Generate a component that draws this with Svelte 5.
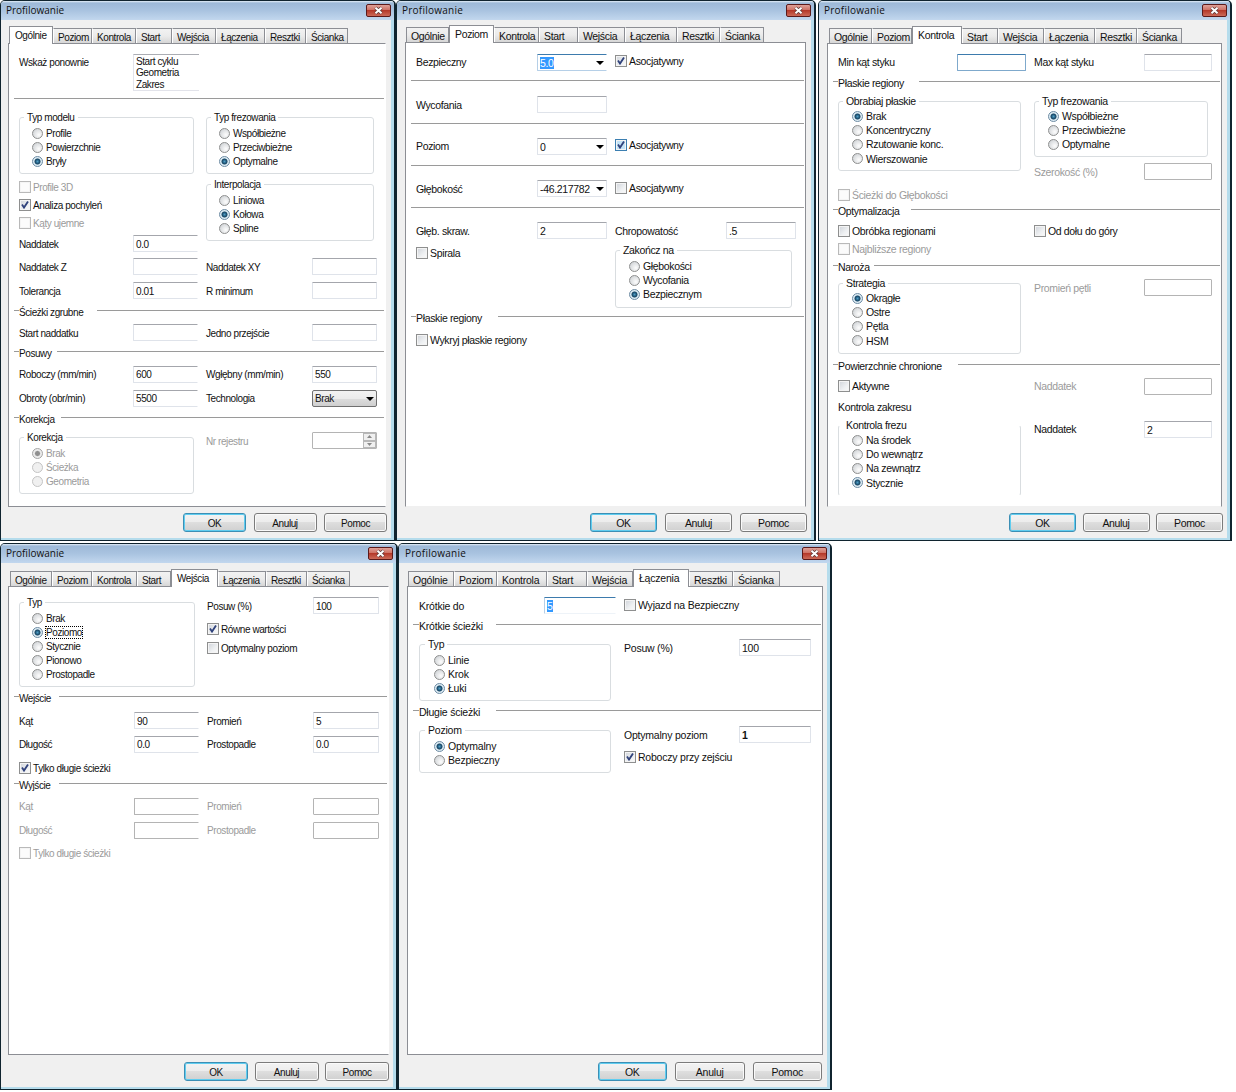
<script>
  const tabNames = ['Ogólnie', 'Poziom', 'Kontrola', 'Start', 'Wejścia', 'Łączenia', 'Resztki', 'Ścianka'];

  // gap = space above an item, h = height of the row, room = width kept free for a section title
  const general = {
    id: 'general', width: 396, height: 541, left: 8, pane: 378, strip: 17, indent: 1, spacing: -0.42,
    active: 0, tabs: [44, 39, 44, 36, 44, 49, 41, 42], cols: [114, 73, 106, 65], button: 63, between: 7.5,
    sections: [
      { left: [{ kind: 'list', label: 'Wskaż ponownie', options: ['Start cyklu', 'Geometria', 'Zakres'], gap: 10, h: 37 }] },
      {
        rule: '', room: 0,
        left: [
          { kind: 'group', label: 'Typ modelu', options: ['Profile', 'Powierzchnie', 'Bryły'], picked: 2, w: 175, gap: 5, h: 64 },
          { kind: 'check', label: 'Profile 3D', disabled: true, gap: 4, h: 18 },
          { kind: 'check', label: 'Analiza pochyleń', checked: true, h: 18 },
          { kind: 'check', label: 'Kąty ujemne', disabled: true, h: 18 },
          { kind: 'field', label: 'Naddatek', value: '0.0', h: 23 },
          { kind: 'field', label: 'Naddatek Z', value: '', h: 23 },
          { kind: 'field', label: 'Tolerancja', value: '0.01', h: 25 }
        ],
        right: [
          { kind: 'group', label: 'Typ frezowania', options: ['Współbieżne', 'Przeciwbieżne', 'Optymalne'], picked: 2, w: 168, gap: 5, h: 64 },
          { kind: 'group', label: 'Interpolacja', options: ['Liniowa', 'Kołowa', 'Spline'], picked: 1, w: 168, gap: 3, h: 64 },
          { kind: 'field', label: 'Naddatek XY', value: '', gap: 14, h: 23 },
          { kind: 'field', label: 'R minimum', value: '', h: 25 }
        ]
      },
      {
        rule: 'Ścieżki zgrubne', room: 78,
        left: [{ kind: 'field', label: 'Start naddatku', value: '', gap: 4, h: 23 }],
        right: [{ kind: 'field', label: 'Jedno przejście', value: '', gap: 4, h: 23 }]
      },
      {
        rule: 'Posuwy', room: 38,
        left: [
          { kind: 'field', label: 'Roboczy (mm/min)', value: '600', gap: 4, h: 24 },
          { kind: 'field', label: 'Obroty (obr/min)', value: '5500', h: 24 }
        ],
        right: [
          { kind: 'field', label: 'Wgłębny (mm/min)', value: '550', gap: 4, h: 24 },
          { kind: 'select', label: 'Technologia', value: 'Brak', h: 24 }
        ]
      },
      {
        rule: 'Korekcja', room: 42,
        left: [{ kind: 'group', label: 'Korekcja', options: ['Brak', 'Ścieżka', 'Geometria'], picked: 0, disabled: true, w: 175, gap: 6, h: 64 }],
        right: [{ kind: 'spinner', label: 'Nr rejestru', disabled: true, gap: 6, h: 21 }]
      }
    ]
  };

  const level = {
    id: 'level', width: 420, height: 541, left: 9, pane: 401, strip: 16, indent: 1, spacing: -0.35,
    active: 1, tabs: [43, 45, 45, 39, 47, 52, 43, 44], cols: [121, 78, 111, 70], button: 67, between: 8,
    sections: [
      {
        left: [{ kind: 'combo', label: 'Bezpieczny', value: '5.0', focused: true, gap: 8, h: 22 }],
        right: [{ kind: 'check', label: 'Asocjatywny', checked: true, gap: 8, h: 20 }]
      },
      { rule: '', room: 0, left: [{ kind: 'field', label: 'Wycofania', value: '', gap: 6, h: 23 }] },
      {
        rule: '', room: 0,
        left: [{ kind: 'combo', label: 'Poziom', value: '0', gap: 4, h: 24 }],
        right: [{ kind: 'check', label: 'Asocjatywny', checked: true, hot: true, gap: 3, h: 23 }]
      },
      {
        rule: '', room: 0,
        left: [{ kind: 'combo', label: 'Głębokość', value: '-46.217782', gap: 5, h: 23 }],
        right: [{ kind: 'check', label: 'Asocjatywny', gap: 4, h: 23 }]
      },
      {
        rule: '', room: 0,
        left: [
          { kind: 'field', label: 'Głęb. skraw.', value: '2', gap: 5, h: 23 },
          { kind: 'check', label: 'Spirala', h: 22 }
        ],
        right: [
          { kind: 'field', label: 'Chropowatość', value: '.5', gap: 5, h: 23 },
          { kind: 'group', label: 'Zakończ na', options: ['Głębokości', 'Wycofania', 'Bezpiecznym'], picked: 2, w: 177, gap: 1, h: 65 }
        ]
      },
      { rule: 'Płaskie regiony', room: 82, gap: 1, left: [{ kind: 'check', label: 'Wykryj płaskie regiony', gap: 8, h: 18 }] }
    ]
  };

  const control = {
    id: 'control', width: 414, height: 541, left: 9, pane: 395, strip: 17, indent: 2, spacing: -0.35,
    active: 2, tabs: [43, 40, 50, 36, 46, 51, 42, 45], cols: [119, 77, 110, 68], button: 67, between: 6.5,
    sections: [
      {
        left: [{ kind: 'field', label: 'Min kąt styku', value: '', focused: true, gap: 7, h: 22 }],
        right: [{ kind: 'field', label: 'Max kąt styku', value: '', gap: 7, h: 22 }]
      },
      {
        rule: 'Płaskie regiony', room: 81, gap: 1,
        left: [
          { kind: 'group', label: 'Obrabiaj płaskie', options: ['Brak', 'Koncentryczny', 'Rzutowanie konc.', 'Wierszowanie'], picked: 0, w: 183, gap: 6, h: 77 },
          { kind: 'check', label: 'Ścieżki do Głębokości', disabled: true, gap: 16, h: 15 }
        ],
        right: [
          { kind: 'group', label: 'Typ frezowania', options: ['Współbieżne', 'Przeciwbieżne', 'Optymalne'], picked: 0, w: 174, gap: 6, h: 63 },
          { kind: 'field', label: 'Szerokość (%)', value: '', disabled: true, gap: 4, h: 21 }
        ]
      },
      {
        rule: 'Optymalizacja', room: 73,
        left: [
          { kind: 'check', label: 'Obróbka regionami', gap: 6, h: 18 },
          { kind: 'check', label: 'Najbliższe regiony', disabled: true, h: 18 }
        ],
        right: [{ kind: 'check', label: 'Od dołu do góry', gap: 6, h: 18 }]
      },
      {
        rule: 'Naroża', room: 36,
        left: [{ kind: 'group', label: 'Strategia', options: ['Okrągłe', 'Ostre', 'Pętla', 'HSM'], picked: 0, w: 183, gap: 4, h: 78 }],
        right: [{ kind: 'field', label: 'Promień pętli', value: '', disabled: true, gap: 5, h: 21 }]
      },
      {
        rule: 'Powierzchnie chronione', room: 120, gap: 3,
        left: [
          { kind: 'check', label: 'Aktywne', gap: 5, h: 20 },
          { kind: 'text', label: 'Kontrola zakresu', h: 22 },
          { kind: 'group', label: 'Kontrola frezu', options: ['Na środek', 'Do wewnątrz', 'Na zewnątrz', 'Stycznie'], picked: 3, open: true, w: 183, h: 78 }
        ],
        right: [
          { kind: 'field', label: 'Naddatek', value: '', disabled: true, gap: 5, h: 20 },
          { kind: 'field', label: 'Naddatek', value: '2', gap: 22, h: 22 }
        ]
      }
    ]
  };

  const entries = {
    id: 'entries', width: 398, height: 547, left: 8, pane: 381, strip: 17, indent: 2, spacing: -0.42,
    active: 4, tabs: [42, 40, 45, 34, 47, 48, 41, 43], cols: [115, 73, 106, 66], button: 64, between: 6.5,
    sections: [
      {
        left: [{ kind: 'group', label: 'Typ', options: ['Brak', 'Poziomo', 'Stycznie', 'Pionowo', 'Prostopadle'], picked: 1, focused: 1, w: 176, gap: 8, h: 92 }],
        right: [
          { kind: 'field', label: 'Posuw (%)', value: '100', gap: 7, h: 23 },
          { kind: 'check', label: 'Równe wartości', checked: true, gap: 3, h: 18 },
          { kind: 'check', label: 'Optymalny poziom', h: 19 }
        ]
      },
      {
        rule: 'Wejście', room: 40, gap: 2,
        left: [
          { kind: 'field', label: 'Kąt', value: '90', gap: 6, h: 23 },
          { kind: 'field', label: 'Długość', value: '0.0', h: 24 },
          { kind: 'check', label: 'Tylko długie ścieżki', checked: true, gap: 3, h: 17 }
        ],
        right: [
          { kind: 'field', label: 'Promień', value: '5', gap: 6, h: 23 },
          { kind: 'field', label: 'Prostopadle', value: '0.0', h: 24 }
        ]
      },
      {
        rule: 'Wyjście', room: 40,
        left: [
          { kind: 'field', label: 'Kąt', value: '', disabled: true, gap: 4, h: 24 },
          { kind: 'field', label: 'Długość', value: '', disabled: true, h: 24 },
          { kind: 'check', label: 'Tylko długie ścieżki', disabled: true, gap: 2, h: 18 }
        ],
        right: [
          { kind: 'field', label: 'Promień', value: '', disabled: true, gap: 4, h: 24 },
          { kind: 'field', label: 'Prostopadle', value: '', disabled: true, h: 24 }
        ]
      }
    ]
  };

  const links = {
    id: 'links', width: 434, height: 547, left: 9, pane: 416, strip: 17, indent: 1, spacing: -0.22,
    active: 5, tabs: [46, 43, 50, 40, 46, 56, 44, 47], cols: [125, 80, 115, 72], button: 69.5, between: 8,
    sections: [
      {
        left: [{ kind: 'field', label: 'Krótkie do', value: '5', focused: true, gap: 7, h: 23 }],
        right: [{ kind: 'check', label: 'Wyjazd na Bezpieczny', gap: 7, h: 22 }]
      },
      {
        rule: 'Krótkie ścieżki', room: 77,
        left: [{ kind: 'group', label: 'Typ', options: ['Linie', 'Krok', 'Łuki'], picked: 2, w: 192, gap: 6, h: 64 }],
        right: [{ kind: 'field', label: 'Posuw (%)', value: '100', gap: 6, h: 21 }]
      },
      {
        rule: 'Długie ścieżki', room: 77, gap: 2,
        left: [{ kind: 'group', label: 'Poziom', options: ['Optymalny', 'Bezpieczny'], picked: 0, w: 192, gap: 6, h: 50 }],
        right: [
          { kind: 'field', label: 'Optymalny poziom', value: '1', bold: true, gap: 6, h: 23 },
          { kind: 'check', label: 'Roboczy przy zejściu', checked: true, h: 21 }
        ]
      }
    ]
  };

  const rows = [[general, level, control], [entries, links]];
</script>

{#snippet entry(item)}
  {#if item.kind === 'group'}
    <fieldset class="group" class:open={item.open} class:disabled={item.disabled}
      style="margin-top: {item.gap || 0}px; height: {item.h}px; width: {item.w}px">
      <legend>{item.label}</legend>
      {#each item.options as option, i}
        <div class="option">
          <span class="radio" class:on={i === item.picked}></span>
          <span class="option-text" class:dotted={i === item.focused}>{option}</span>
        </div>
      {/each}
    </fieldset>
  {:else}
    <div class="item {item.kind}" class:disabled={item.disabled} style="margin-top: {item.gap || 0}px; height: {item.h}px">
      {#if item.kind === 'check'}
        <span class="box" class:hot={item.hot}>
          {#if item.checked}
            <svg viewBox="0 0 12 12" width="12" height="12"><path d="M3 5.6 L5 8.6 L9 2.4" /></svg>
          {/if}
        </span>
      {/if}
      <span class="label">{item.label}</span>
      {#if item.kind === 'list'}
        <div class="listbox">
          {#each item.options as option}<div>{option}</div>{/each}
        </div>
      {:else if item.kind === 'field'}
        <div class="input" class:focused={item.focused} class:bold={item.bold}>
          <span class:selected={item.focused && item.value}>{item.value}</span>
        </div>
      {:else if item.kind === 'combo' || item.kind === 'select'}
        <div class="input" class:focused={item.focused} class:dropdown={item.kind === 'select'}>
          <span class:selected={item.focused}>{item.value}</span>
          <svg class="arrow" viewBox="0 0 8 4" width="8" height="4"><path d="M0 0 H8 L4 4 Z" /></svg>
        </div>
      {:else if item.kind === 'spinner'}
        <div class="input">
          <div class="spin">
            <span><svg viewBox="0 0 5 3" width="5" height="3"><path d="M0 3 L2.5 0 L5 3 Z" /></svg></span>
            <span><svg viewBox="0 0 5 3" width="5" height="3"><path d="M0 0 L2.5 3 L5 0 Z" /></svg></span>
          </div>
        </div>
      {/if}
    </div>
  {/if}
{/snippet}

<main>
  {#each rows as row}
    <div class="row">
      {#each row as win}
        <section class="window {win.id}" style="width: {win.width}px; height: {win.height}px; letter-spacing: {win.spacing}px">
          <header>
            <h1>Profilowanie</h1>
            <button class="close" aria-label="Zamknij">
              <svg viewBox="0 0 11 9" width="11" height="9">
                <path class="edge" d="M2.5 1.8 L8.5 7.2 M8.5 1.8 L2.5 7.2" />
                <path class="cross" d="M2.5 1.8 L8.5 7.2 M8.5 1.8 L2.5 7.2" />
              </svg>
            </button>
          </header>
          <div class="client" style="padding-left: {win.left - 1}px">
            <nav style="height: {win.strip}px; padding-left: {win.indent}px">
              {#each tabNames as name, i}
                <button class="tab" class:active={i === win.active} style="width: {win.tabs[i]}px">{name}</button>
              {/each}
            </nav>
            <div class="pane" style="width: {win.pane}px; --a: {win.cols[0]}px; --b: {win.cols[1]}px; --c: {win.cols[2]}px; --d: {win.cols[3]}px">
              {#each win.sections as part}
                {#if part.rule !== undefined}
                  <div class="rule" style="margin-top: {part.gap || 0}px">
                    <i class="dash"></i>
                    <span style="width: {part.room}px">{part.rule}</span>
                    <i class="line"></i>
                  </div>
                {/if}
                <div class="columns">
                  <div class="stack">
                    {#each part.left as item}{@render entry(item)}{/each}
                  </div>
                  <div class="stack second">
                    {#each part.right || [] as item}{@render entry(item)}{/each}
                  </div>
                </div>
              {/each}
            </div>
            <footer style="gap: {win.between}px">
              {#each ['OK', 'Anuluj', 'Pomoc'] as name, i}
                <button class="push" class:default={i === 0} style="width: {win.button}px">{name}</button>
              {/each}
            </footer>
          </div>
        </section>
      {/each}
    </div>
  {/each}
</main>

<style>
  :global(body) {
    background: #fff;
  }

  main {
    display: flex;
    flex-direction: column;
    gap: 2px;
    width: 1236px;
    height: 1092px;
    overflow: hidden;
    background: #fff;
    color: #111;
    font-family: 'Liberation Sans', Arial, sans-serif;
    font-size: 10.5px;
    line-height: 14px;
    white-space: nowrap;
  }

  .row {
    display: flex;
  }

  .window {
    box-sizing: border-box;
    display: flex;
    flex-direction: column;
    flex: none;
    border: 1px solid #10242f;
    border-right-width: 2px;
    border-radius: 5px 5px 0 0;
    background: #f0f0f0;
    overflow: hidden;
  }

  .general,
  .entries {
    font-size: 10px;
    line-height: 15px;
  }

  .general .label,
  .entries .label {
    padding-top: 1px;
  }

  .control {
    margin-left: 2px;
  }

  header {
    display: flex;
    justify-content: space-between;
    height: 19px;
    flex: none;
    padding: 0 3px 0 5px;
    background: linear-gradient(#e4eef8 0, #9db9d8 2px, #a9c3e0 50%, #c2d7ee 100%);
  }

  .links header {
    padding-left: 6px;
  }

  h1 {
    margin: 0;
    font: 10px/19px 'Open Sans', sans-serif;
    letter-spacing: 0;
    color: #111;
  }

  .level h1,
  .control h1,
  .links h1 {
    letter-spacing: 0.25px;
  }

  .close {
    display: flex;
    align-items: center;
    justify-content: center;
    box-sizing: border-box;
    width: 25px;
    height: 13px;
    margin-top: 3px;
    padding: 0;
    border: 1px solid #5b1a1a;
    border-radius: 2px;
    background: linear-gradient(#dfa198 0, #cf7164 45%, #b5392a 50%, #cc6a58 100%);
  }

  .edge {
    stroke: #5c3a3a;
    stroke-width: 3.4;
  }

  .cross {
    stroke: #fff;
    stroke-width: 2;
  }

  .client {
    flex: 1;
    padding-top: 6px;
    border-right: 3px solid #b5dcec;
    border-bottom: 2px solid #b5dcec;
  }

  nav {
    display: flex;
    align-items: flex-end;
    box-sizing: border-box;
  }

  .tab {
    box-sizing: border-box;
    flex: none;
    height: 15px;
    padding: 1px 0 0 4px;
    border: 1px solid #8c8e94;
    border-left-color: #fff;
    border-bottom: 0;
    background: linear-gradient(#f2f2f2 0, #ebebeb 50%, #d6d6d6 100%);
    color: #111;
    font: inherit;
    letter-spacing: inherit;
    text-align: left;
  }

  .tab:first-child {
    border-left-color: #8c8e94;
  }

  .tab.active {
    height: 18px;
    margin-bottom: -1px;
    padding-bottom: 2px;
    padding-left: 5px;
    border-left-color: #8c8e94;
    background: #fff;
    position: relative;
  }

  .pane {
    box-sizing: border-box;
    height: 464px;
    border: 1px solid #8c8e94;
    background: #fff;
  }

  .general .pane,
  .entries .pane {
    border-right-color: #fff;
  }

  .entries .pane,
  .links .pane {
    height: 469px;
  }

  .level .pane {
    height: 465px;
  }

  .level .pane,
  .control .pane {
    border-bottom-color: #f0f0f0;
  }

  .columns {
    display: grid;
    grid-template-columns: calc(var(--a) + var(--b)) 1fr;
    padding-left: 10px;
  }

  .links .columns {
    padding-left: 11px;
  }

  .rule {
    display: flex;
    align-items: center;
    height: 14px;
    padding: 0 1px 0 5px;
  }

  .rule span {
    position: relative;
    top: 2px;
    flex: none;
  }

  .rule i {
    height: 1px;
    background: #9a9a9a;
  }

  .dash {
    width: 5px;
  }

  .links .dash {
    width: 6px;
  }

  .line {
    flex: 1;
  }

  .item {
    display: flex;
    align-items: center;
  }

  .item .label {
    width: var(--a);
    flex: none;
  }

  .second .item .label {
    width: var(--c);
  }

  .item.check .label {
    width: auto;
  }

  .item.list {
    align-items: flex-start;
  }

  .item.disabled,
  .group.disabled .option {
    color: #9b9b9b;
  }

  .listbox {
    box-sizing: border-box;
    width: 66px;
    height: 37px;
    padding: 1px 0 0 2px;
    border: 1px solid #e2e3ea;
    border-top-color: #abadb3;
    border-right: 0;
    line-height: 11.3px;
  }

  .input {
    display: flex;
    align-items: center;
    box-sizing: border-box;
    width: 66px;
    height: 17px;
    padding: 1px 2px 0;
    border: 1px solid #dfe3ea;
    border-top-color: #a4a6ac;
    border-radius: 1px;
    background: #fff;
    color: #111;
  }

  .stack .input {
    width: calc(var(--b) - 8px);
  }

  .second .input {
    width: var(--d);
  }

  .general .stack:first-child .input,
  .entries .stack:first-child .input {
    border-right-color: #fff;
  }

  .disabled .input {
    border-color: #b4b4b4;
  }

  .input.focused {
    border-color: #b5cfe7;
    border-top-color: #3d7bad;
  }

  .level .input.focused {
    border-right-color: #fff;
  }

  .control .input.focused {
    border-color: #7fa9cc;
    border-top-color: #3d7bad;
  }

  .links .input.focused {
    border-right-color: #fff;
    border-bottom-color: #eef3f8;
  }

  .bold {
    font-weight: bold;
  }

  .selected {
    background: #3399ff;
    color: #fff;
    line-height: 12px;
  }

  .arrow {
    flex: none;
    margin-left: auto;
    fill: #000;
  }

  .dropdown {
    border-color: #707070;
    border-radius: 2px;
    background: linear-gradient(#f2f2f2 0, #ebebeb 50%, #dddddd 50%, #cfcfcf 100%);
  }

  .input.dropdown {
    border-color: #707070;
  }

  .spinner .input {
    padding: 0;
  }

  .spin {
    display: flex;
    flex-direction: column;
    margin-left: auto;
    width: 13px;
    height: 15px;
  }

  .spin span {
    display: flex;
    flex: 1;
    align-items: center;
    justify-content: center;
    border: 1px solid #b8b8b8;
    background: #f0f0f0;
  }

  .spin svg {
    fill: #8a8a8a;
  }

  .box {
    display: flex;
    box-sizing: border-box;
    width: 12px;
    height: 12px;
    margin-right: 2px;
    border: 1px solid #8e8f8f;
    background: linear-gradient(135deg, #cfd3d9 0, #eef0f2 60%, #fafafa 100%);
    box-shadow: inset 0 0 0 1px #f4f4f4;
  }

  .box svg {
    flex: none;
    margin: -1px;
    fill: none;
    stroke: #31437c;
    stroke-width: 1.8;
  }

  .box.hot {
    border-color: #3c7fb1;
    background: #c3e3f7;
  }

  .disabled .box {
    border-color: #b9b9b9;
    background: #fbfbfb;
  }

  .group {
    box-sizing: border-box;
    min-width: 0;
    margin: 0;
    padding: 2px 0 0 12px;
    border: 1px solid #d9dde0;
    border-radius: 3px;
  }

  .level .group,
  .control .group {
    padding-left: 13px;
  }

  .control .group {
    padding-top: 1px;
  }

  .links .group {
    padding-left: 14px;
  }

  .group.open {
    border-top-color: #fff;
    border-bottom-color: #fff;
  }

  legend {
    height: 14px;
    margin-left: -8px;
    padding: 0 3px;
  }

  .level legend,
  .control legend,
  .links legend {
    margin-left: -9px;
  }

  .option {
    display: flex;
    align-items: center;
    height: 14.2px;
  }

  .radio {
    box-sizing: border-box;
    width: 11px;
    height: 11px;
    margin-right: 2px;
    border: 1px solid #8e8f8f;
    border-radius: 50%;
    background: radial-gradient(circle at 65% 65%, #fdfdfd 0, #d2d5d8 80%);
  }

  .radio.on {
    border-color: #6d8ba3;
    background: radial-gradient(circle, #4d9cc4 0, #12405f 2.6px, #dcebf3 3.4px);
  }

  .disabled .radio {
    border-color: #c4c4c4;
    background: #f0f0f0;
  }

  .disabled .radio.on {
    border-color: #a5a5a5;
    background: radial-gradient(circle, #8f8f8f 2px, #ececec 3.2px);
  }

  .option-text {
    padding: 0 1px;
    line-height: 12px;
  }

  .general .option-text,
  .entries .option-text {
    padding-top: 1px;
  }

  .dotted {
    outline: 1px dotted #000;
    outline-offset: -1px;
  }

  footer {
    display: flex;
    justify-content: flex-end;
    padding: 6px 4px 0 0;
  }

  .entries footer,
  .links footer {
    padding-top: 7px;
  }

  .links footer {
    padding-right: 5px;
  }

  .push {
    box-sizing: border-box;
    height: 19px;
    padding: 1px 0 0;
    border: 1px solid #7b7b7b;
    border-radius: 3px;
    background: linear-gradient(#f3f3f3 0, #ececec 50%, #dedede 50%, #d0d0d0 100%);
    box-shadow: inset 0 0 0 1px #fafafa;
    color: #111;
    font: inherit;
    letter-spacing: inherit;
  }

  .push.default {
    border-color: #3c8fb5;
    box-shadow: inset 0 0 0 1px #5fcdf0;
  }
</style>
